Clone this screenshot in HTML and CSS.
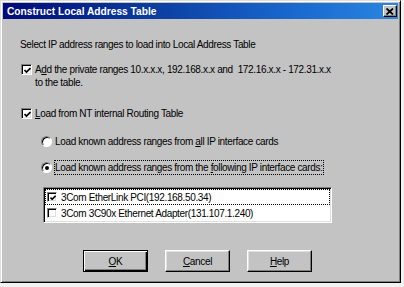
FILE: index.html
```html
<!DOCTYPE html>
<html>
<head>
<meta charset="utf-8">
<link rel="stylesheet" href="styles.css">
</head>
<body>
<div class="window">
  <div class="titlebar">
    <span class="title">Construct Local Address Table</span>
    <span class="close"><svg width="8" height="7" viewBox="0 0 8 7"><path d="M0.5 0.5 L7 6.5 M7 0.5 L0.5 6.5" stroke="#000" stroke-width="1.8" fill="none"/></svg></span>
  </div>
  <div class="content">
    <p class="intro">Select IP address ranges to load into Local Address Table</p>
    <div class="row row-private">
      <span class="cb"><svg width="7" height="7" viewBox="0 0 7 7"><polyline points="0.5,3 2.5,5 6.5,1" stroke="#000" stroke-width="1.7" fill="none"/></svg></span>
      <span class="label">A<u>d</u>d the private ranges 10.x.x.x, 192.168.x.x and&nbsp; 172.16.x.x - 172.31.x.x<br>to the table.</span>
    </div>
    <div class="row row-nt">
      <span class="cb"><svg width="7" height="7" viewBox="0 0 7 7"><polyline points="0.5,3 2.5,5 6.5,1" stroke="#000" stroke-width="1.7" fill="none"/></svg></span>
      <span class="label"><u>L</u>oad from NT internal Routing Table</span>
    </div>
    <div class="row radio-row radio-all">
      <span class="radio"></span>
      <span class="label">Load known address ranges from <u>a</u>ll IP interface cards</span>
    </div>
    <div class="row radio-row radio-following">
      <span class="radio selected"></span>
      <span class="label focus">Load known address ranges from the <u>f</u>ollowing IP interface cards:</span>
    </div>
    <div class="listbox">
      <div class="item focus">
        <span class="cb small"><svg width="6" height="6" viewBox="0 0 7 7"><polyline points="0.5,3 2.5,5 6.5,1" stroke="#000" stroke-width="1.8" fill="none"/></svg></span>
        <span>3Com EtherLink PCI(192.168.50.34)</span>
      </div>
      <div class="item">
        <span class="cb small"></span>
        <span>3Com 3C90x Ethernet Adapter(131.107.1.240)</span>
      </div>
    </div>
    <div class="buttons">
      <button class="btn default"><u>O</u>K</button>
      <button class="btn"><u>C</u>ancel</button>
      <button class="btn"><u>H</u>elp</button>
    </div>
  </div>
</div>
</body>
</html>
```

FILE: styles.css
```css
html, body {
  margin: 0;
  padding: 0;
}
body {
  background: #f2f2f2;
  width: 404px;
  height: 287px;
  overflow: hidden;
  font-family: "Liberation Sans", Arial, sans-serif;
  font-size: 10px;
  letter-spacing: -0.35px;
  line-height: 13px;
  color: #000;
}
.window {
  box-sizing: border-box;
  width: 401px;
  height: 283px;
  background: #c3c3c3;
  border: 1px solid;
  border-color: #dfdfdf #000 #000 #dfdfdf;
  box-shadow: inset 1px 1px #fff, inset -1px -1px #808080;
  padding: 2px;
  display: flex;
  flex-direction: column;
}
.titlebar {
  height: 16px;
  background: linear-gradient(to right, #000a78 0%, #0a3a9c 35%, #1a6ad0 75%, #2a86e0 100%);
  display: flex;
  align-items: center;
  justify-content: space-between;
  padding: 0 1px 0 4px;
}
.title {
  color: #fff;
  font-weight: bold;
  font-size: 10.2px;
  letter-spacing: 0;
}
.close {
  box-sizing: border-box;
  width: 14px;
  height: 12px;
  background: #c3c3c3;
  border: 1px solid;
  border-color: #fff #000 #000 #fff;
  box-shadow: inset -1px -1px #808080;
  display: flex;
  align-items: center;
  justify-content: center;
}
.close svg { display: block; }
.content {
  padding: 0 0 0 17px;
  display: flex;
  flex-direction: column;
  align-items: flex-start;
}
.intro {
  margin: 19px 0 0 0;
}
.row {
  display: flex;
  align-items: flex-start;
  gap: 3px;
}
.row-private { margin: 12px 0 0 1px; }
.row-nt { margin: 18px 0 0 1px; }
.radio-all { margin: 15px 0 0 21px; }
.radio-following { margin: 13px 0 0 21px; }
.cb {
  box-sizing: border-box;
  width: 11px;
  height: 11px;
  margin-top: 1px;
  flex: none;
  background: #fff;
  border: 1px solid;
  border-color: #808080 #fff #fff #808080;
  box-shadow: inset 1px 1px #000, inset -1px -1px #dfdfdf;
  display: flex;
  align-items: center;
  justify-content: center;
  padding: 1px 0 0 1px;
}
.cb svg { display: block; }
.cb.small {
  width: 10px;
  height: 10px;
  margin-top: 0;
}
.radio {
  position: relative;
  box-sizing: border-box;
  width: 11px;
  height: 11px;
  margin-top: 1px;
  flex: none;
  border-radius: 50%;
  background: #fff;
  border: 1px solid;
  border-color: #808080 #fff #fff #808080;
  box-shadow: inset 1px 1px #000;
}
.radio.selected::after {
  content: "";
  position: absolute;
  left: 2.5px;
  top: 2.5px;
  width: 4px;
  height: 4px;
  border-radius: 50%;
  background: #000;
}
.label.focus {
  outline: 1px dotted #000;
}
.listbox {
  box-sizing: border-box;
  width: 289px;
  height: 36px;
  margin: 13px 0 0 23px;
  background: #fff;
  border: 1px solid;
  border-color: #808080 #fff #fff #808080;
  box-shadow: inset 1px 1px #000, inset -1px -1px #dfdfdf;
  padding: 1px;
}
.item {
  height: 16px;
  box-sizing: border-box;
  display: flex;
  align-items: center;
  gap: 4px;
  padding-left: 2px;
}
.item.focus {
  outline: 1px dotted #000;
  outline-offset: -1px;
}
.buttons {
  display: flex;
  gap: 17px;
  margin: 27px 0 0 63px;
}
.btn {
  box-sizing: border-box;
  width: 65px;
  height: 22px;
  background: #c3c3c3;
  font: inherit;
  letter-spacing: inherit;
  color: #000;
  padding: 0;
  border: 1px solid;
  border-color: #fff #000 #000 #fff;
  box-shadow: inset -1px -1px #808080, inset 1px 1px #dfdfdf;
}
.btn.default {
  border: 1px solid #000;
  box-shadow: inset 1px 1px #fff, inset -1px -1px #000, inset -2px -2px #808080;
}
```
